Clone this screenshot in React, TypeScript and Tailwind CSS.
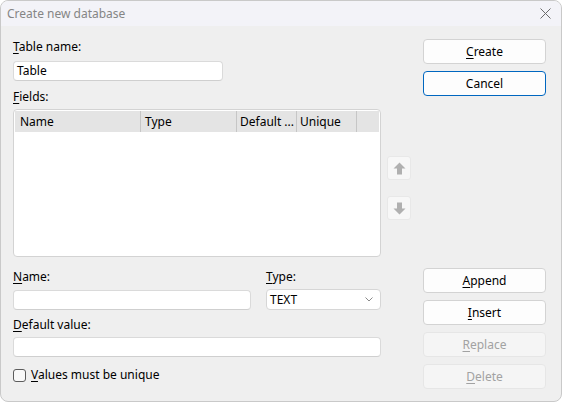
const font = { fontFamily: '"Noto Sans", "Open Sans", sans-serif' }

function U({ c, rest }: { c: string; rest: string }) {
  return (
    <span>
      <span className="underline underline-offset-2">{c}</span>
      {rest}
    </span>
  )
}

function Btn({ children, primary, disabled }: { children: React.ReactNode; primary?: boolean; disabled?: boolean }) {
  const cls = disabled
    ? 'bg-[#f5f5f5] border-[#e6e6e6] text-[#a2a2a2]'
    : primary
      ? 'bg-[#fdfdfd] border-[#0067c0] text-black'
      : 'bg-[#fdfdfd] border-[#d3d3d3] text-black'
  return (
    <div className={`h-[25px] w-[123px] rounded-[4px] border flex items-center justify-center text-[12px] ${cls}`}>
      {children}
    </div>
  )
}

function Input({ w, value }: { w: string; value?: string }) {
  return (
    <div className={`${w} h-[20px] bg-white rounded-[4px] border border-[#dadada] border-b-[#cfcfcf] px-[3px] flex items-center text-[12px] text-black`}>
      {value}
    </div>
  )
}

function Arrow({ down }: { down?: boolean }) {
  return (
    <div className="w-[24px] h-[24px] rounded-[3px] bg-[#f7f7f7] border border-[#e8e8e8] flex items-center justify-center">
      <svg width="13" height="13" viewBox="0 0 13 13" className={down ? 'rotate-180' : ''}>
        <polygon points="6.5,0.5 12.5,6.5 9,6.5 9,12.5 4,12.5 4,6.5 0.5,6.5" fill="#b0b0b0" />
      </svg>
    </div>
  )
}

export default function App() {
  return (
    <div style={font} className="w-[562px] h-[402px] bg-[#efefef] border border-[#c9c9c9] rounded-lg overflow-hidden flex flex-col">
      {/* title bar */}
      <div className="h-[25px] bg-[#f3f3f8] flex items-center justify-between pl-[6px] pr-[10px] shrink-0">
        <span className="text-[12px] text-[#858585]">Create new database</span>
        <svg width="11" height="11" viewBox="0 0 11 11">
          <path d="M0.5 0.5 L10.5 10.5 M10.5 0.5 L0.5 10.5" stroke="#6b6b6b" strokeWidth="1" />
        </svg>
      </div>

      {/* body */}
      <div className="flex pl-[12px] pt-[13px] text-[12px] text-black">
        {/* left column */}
        <div className="w-[368px] flex flex-col">
          <div className="h-[16px] leading-[16px]"><U c="T" rest="able name:" /></div>
          <div className="mt-[6px]"><Input w="w-[210px]" value="Table" /></div>
          <div className="h-[16px] leading-[16px] mt-[8px]"><U c="F" rest="ields:" /></div>
          <div className="mt-[4px] h-[148px] bg-white border border-[#d3d3d3] rounded-[4px] overflow-hidden">
            <div className="h-[21px] bg-[#e4e4e4] flex items-center mx-[1px] mt-[1px]">
              <div className="w-[126px] pl-[5px] border-r border-[#c6c6c6] h-full flex items-center">Name</div>
              <div className="w-[96px] pl-[4px] border-r border-[#c6c6c6] h-full flex items-center">Type</div>
              <div className="w-[60px] pl-[3px] border-r border-[#c6c6c6] h-full flex items-center">Default ...</div>
              <div className="w-[60px] pl-[3px] border-r border-[#c6c6c6] h-full flex items-center">Unique</div>
              <div className="flex-1" />
            </div>
          </div>
          <div className="flex gap-[15px] mt-[12px]">
            <div className="flex flex-col">
              <div className="h-[16px] leading-[16px]"><U c="N" rest="ame:" /></div>
              <div className="mt-[5px]"><Input w="w-[238px]" /></div>
            </div>
            <div className="flex flex-col">
              <div className="h-[16px] leading-[16px]"><U c="T" rest="ype:" /></div>
              <div className="mt-[4px] w-[115px] h-[21px] bg-white rounded-[4px] border border-[#d6d6d6] flex items-center justify-between pl-[3px] pr-[7px]">
                <span>TEXT</span>
                <svg width="8" height="5" viewBox="0 0 8 5">
                  <path d="M0.5 0.5 L4 4 L7.5 0.5" fill="none" stroke="#8a8a8a" strokeWidth="1" />
                </svg>
              </div>
            </div>
          </div>
          <div className="h-[16px] leading-[16px] mt-[7px]"><U c="D" rest="efault value:" /></div>
          <div className="mt-[4px]"><Input w="w-[368px]" /></div>
          <div className="flex items-center gap-[5px] mt-[11px] h-[14px]">
            <div className="w-[13px] h-[13px] rounded-[3px] border border-[#5c5c5c] bg-[#f9f9f9]" />
            <U c="V" rest="alues must be unique" />
          </div>
        </div>

        {/* arrows */}
        <div className="ml-[6px] pt-[117px] flex flex-col gap-[16px]">
          <Arrow />
          <Arrow down />
        </div>

        {/* right column */}
        <div className="ml-[12px] flex flex-col">
          <Btn><U c="C" rest="reate" /></Btn>
          <div className="mt-[7px]"><Btn primary>Cancel</Btn></div>
          <div className="mt-[172px] flex flex-col gap-[7px]">
            <Btn><U c="A" rest="ppend" /></Btn>
            <Btn><U c="I" rest="nsert" /></Btn>
            <Btn disabled><U c="R" rest="eplace" /></Btn>
            <Btn disabled><U c="D" rest="elete" /></Btn>
          </div>
        </div>
      </div>
    </div>
  )
}
